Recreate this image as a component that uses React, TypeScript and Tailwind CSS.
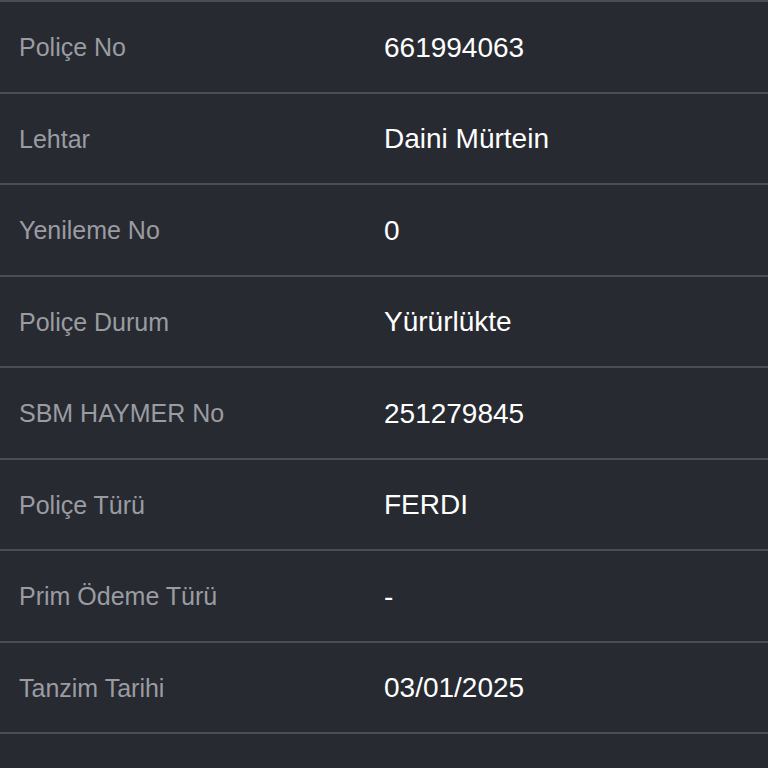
const rows = [
  ["Poliçe No", "661994063"],
  ["Lehtar", "Daini Mürtein"],
  ["Yenileme No", "0"],
  ["Poliçe Durum", "Yürürlükte"],
  ["SBM HAYMER No", "251279845"],
  ["Poliçe Türü", "FERDI"],
  ["Prim Ödeme Türü", "-"],
  ["Tanzim Tarihi", "03/01/2025"],
];

export default function App() {
  return (
    <div
      className="h-[768px] w-[768px] overflow-hidden bg-[#272a31]"
      style={{ fontFamily: '"Liberation Sans", Arial, sans-serif' }}
    >
      <div className="border-b-2 border-[#4a4d54]">
        {rows.map(([label, value]) => (
          <div
            key={label}
            className="box-border flex h-[91.5px] items-center border-t-2 border-[#4a4d54] pt-[2px]"
          >
            <div className="w-[384px] pl-[19px] text-[25px] text-[#9a9ca1]">{label}</div>
            <div className="text-[28px] text-white">{value}</div>
          </div>
        ))}
      </div>
    </div>
  );
}
